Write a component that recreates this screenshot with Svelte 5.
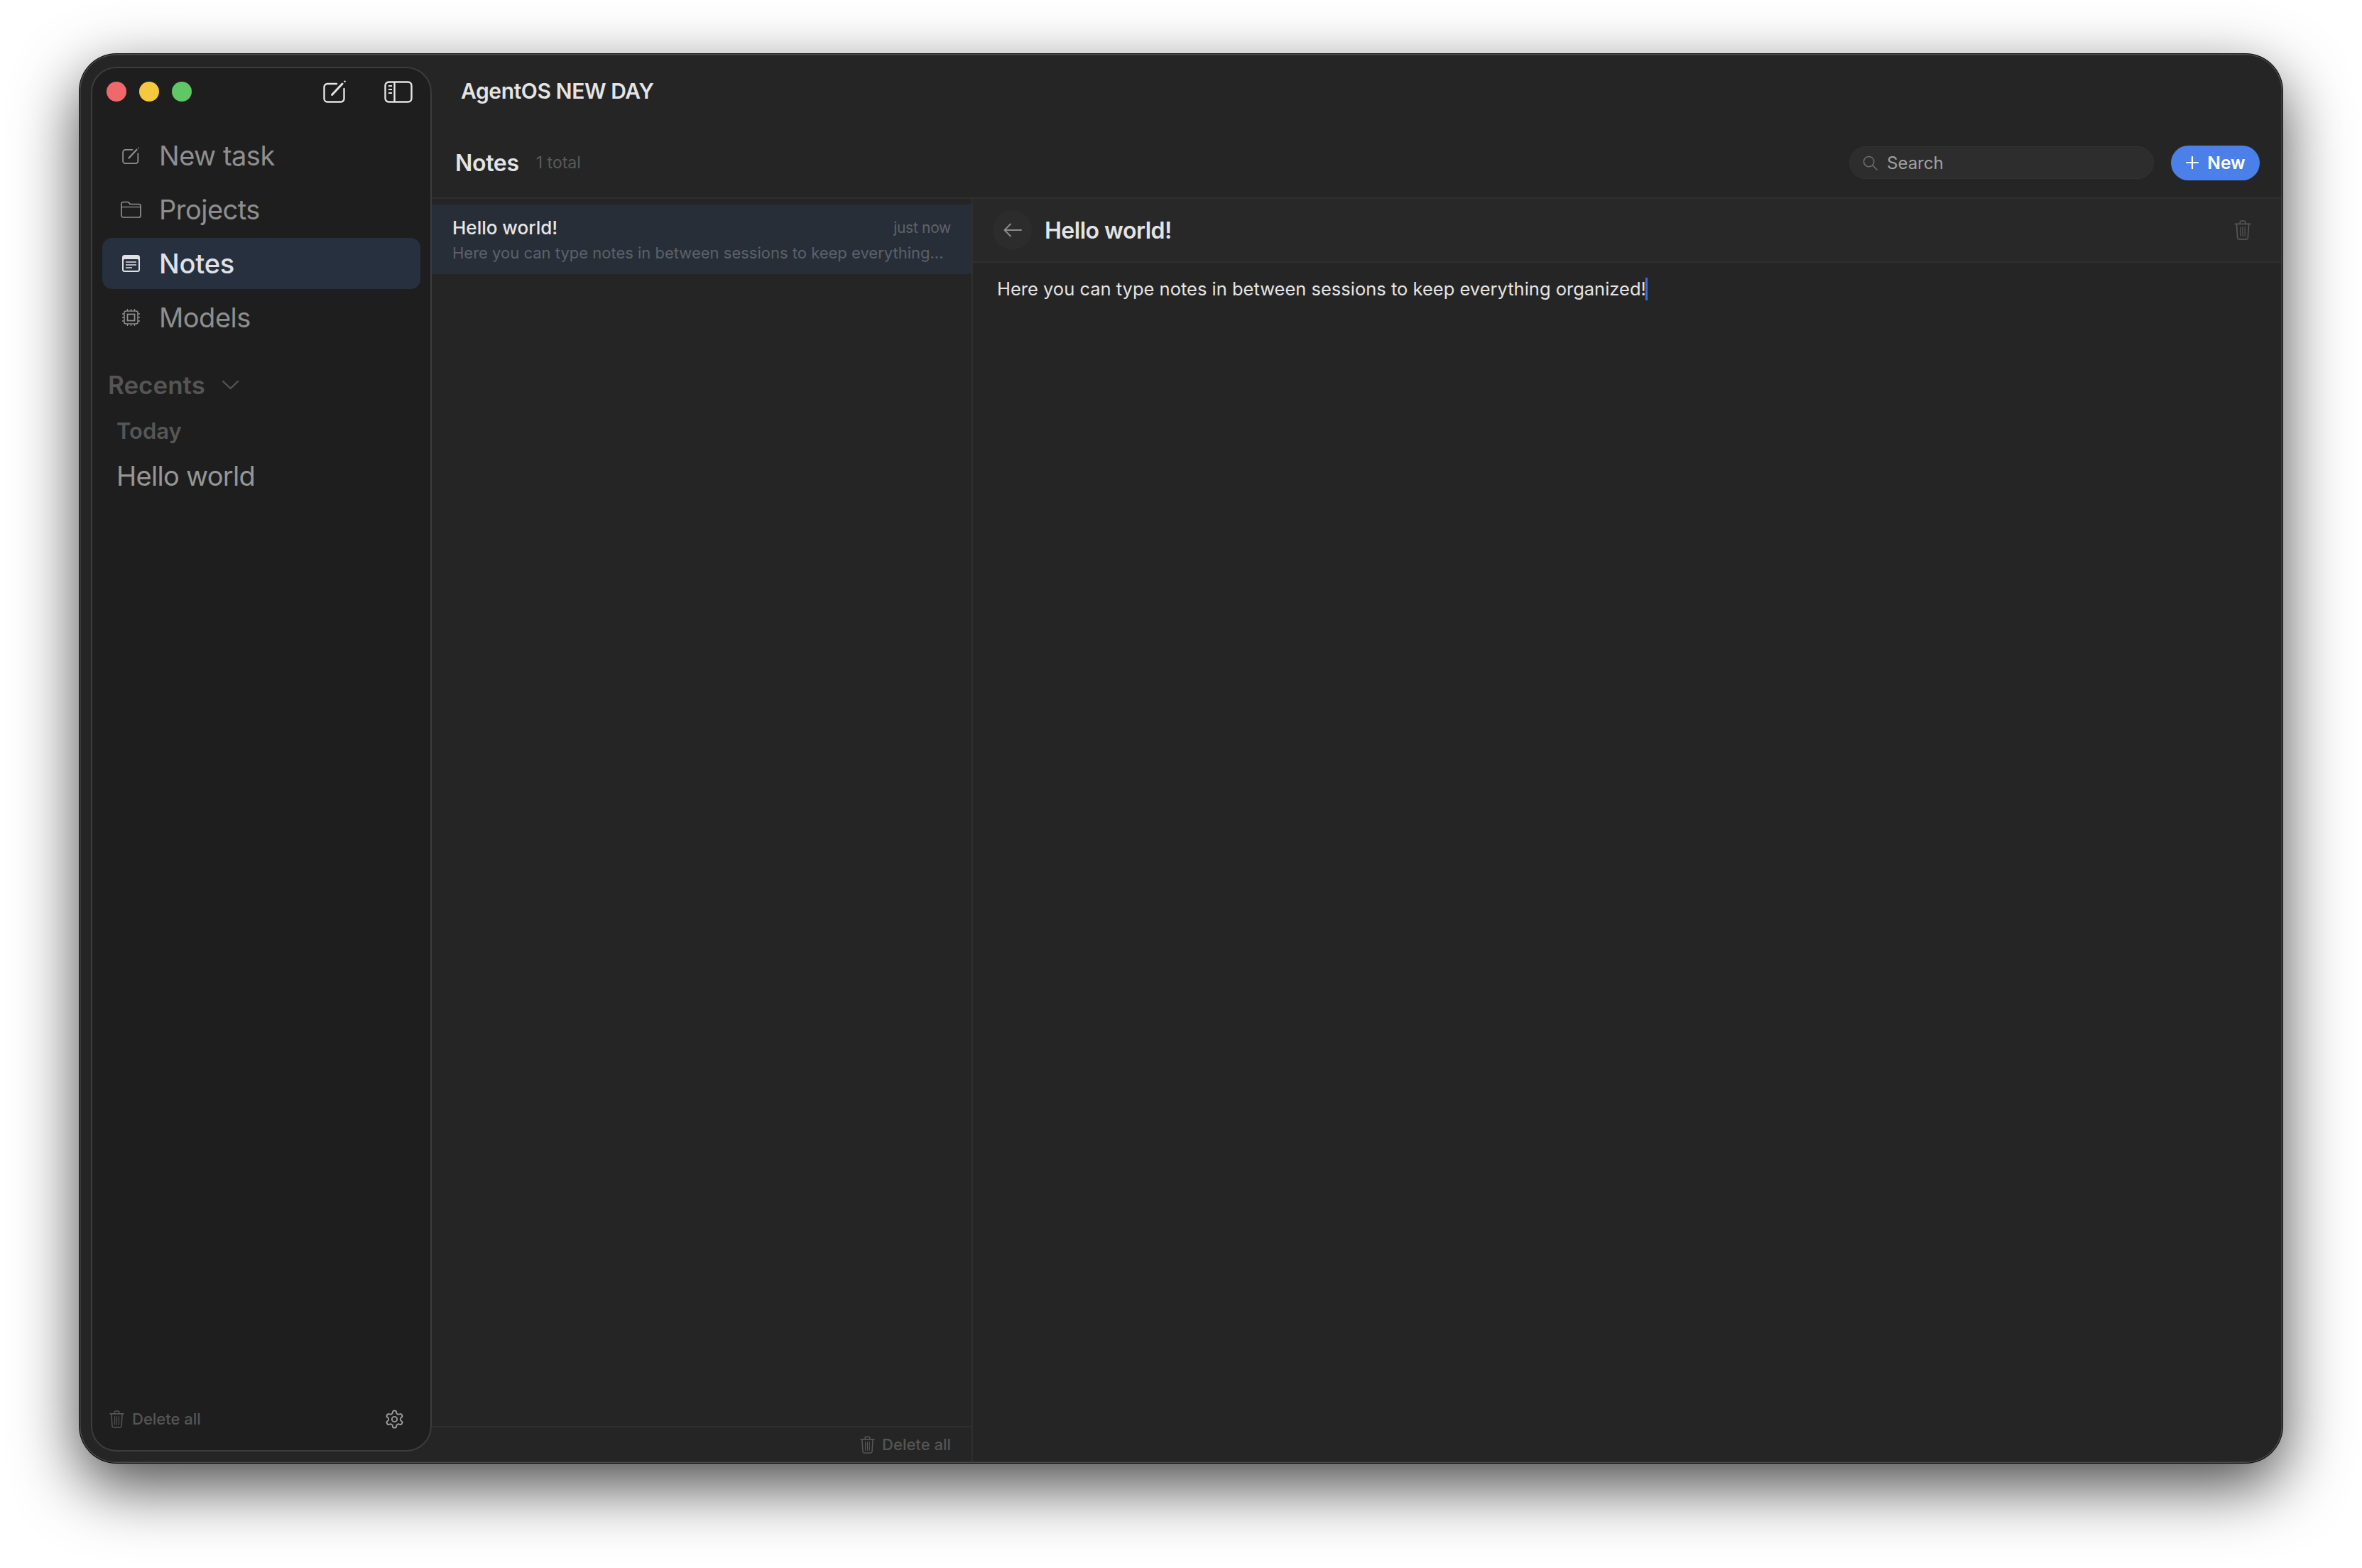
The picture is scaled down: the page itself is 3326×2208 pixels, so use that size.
<script>
  const navItems = [
    { name: 'New task', icon: 'compose' },
    { name: 'Projects', icon: 'folder' },
    { name: 'Notes', icon: 'notes', active: true },
    { name: 'Models', icon: 'cpu' }
  ]
  const noteBody = 'Here you can type notes in between sessions to keep everything organized!'
</script>

{#snippet trash(cls)}
  <svg class={cls} viewBox="0 0 22 26" fill="none" stroke="currentColor" stroke-width="1.6" stroke-linecap="round" stroke-linejoin="round">
    <path d="M1 5h20" />
    <path d="M7.5 5V3a2 2 0 0 1 2-2h3a2 2 0 0 1 2 2v2" />
    <path d="M3 5l1.2 18.2A2 2 0 0 0 6.2 25h9.6a2 2 0 0 0 2-1.8L19 5" />
    <path d="M8 9v12M11 9v12M14 9v12" stroke-width="1.2" />
  </svg>
{/snippet}

{#snippet compose(cls)}
  <svg class={cls} viewBox="0 0 33 33" fill="none" stroke="currentColor" stroke-width="2.4" stroke-linecap="round" stroke-linejoin="round">
    <path d="M19 5H6a4.5 4.5 0 0 0-4.5 4.5V26A4.5 4.5 0 0 0 6 30.5h19a4.5 4.5 0 0 0 4.5-4.5V12" />
    <path d="M12.5 20.5 27 5" stroke-width="3" />
    <circle cx="30.5" cy="1.8" r="1.3" fill="currentColor" stroke="none" />
  </svg>
{/snippet}

<div class="page">
  <div class="window">
    <aside class="sidebar">
      <div class="side-top">
        <div class="lights">
          <span class="light red"></span>
          <span class="light yellow"></span>
          <span class="light green"></span>
        </div>
        <div class="side-tools">
          {@render compose('tool-compose')}
          <svg class="tool-panel" viewBox="0 0 40 31" fill="none" stroke="currentColor" stroke-width="2.4">
            <rect x="1.5" y="1.5" width="37" height="28" rx="5" />
            <path d="M14.5 1.5v28" />
            <path d="M6 7h5M6 12h5M6 17h5" stroke-width="2" />
          </svg>
        </div>
      </div>

      <nav class="nav">
        {#each navItems as item}
          <div class="nav-row" class:active={item.active}>
            <span class="nav-icon">
              {#if item.icon === 'compose'}
                {@render compose('ic-compose')}
              {:else if item.icon === 'folder'}
                <svg class="ic-folder" viewBox="0 0 29 24" fill="none" stroke="currentColor" stroke-width="1.7" stroke-linejoin="round">
                  <path d="M1 4a2.5 2.5 0 0 1 2.5-2.5h6.3a2 2 0 0 1 1.5.6l1.9 2.4h12.3A2.5 2.5 0 0 1 28 7v13.5a2.5 2.5 0 0 1-2.5 2.5h-22A2.5 2.5 0 0 1 1 20.5z" />
                  <path d="M1 8.5h27" stroke-width="1.3" />
                </svg>
              {:else if item.icon === 'notes'}
                <svg class="ic-notes" viewBox="0 0 25 24">
                  <rect x="0" y="0" width="25" height="24" rx="3.5" fill="currentColor" />
                  <rect x="2" y="6" width="21" height="16" rx="1.5" fill="#27303f" />
                  <path d="M5 10h15M5 14h15M5 18h9" stroke="currentColor" stroke-width="1.7" fill="none" />
                </svg>
              {:else}
                <svg class="ic-cpu" viewBox="0 0 25 24" fill="none" stroke="currentColor" stroke-width="1.5">
                  <rect x="3" y="3" width="19" height="18" rx="2.5" />
                  <rect x="7.5" y="7.5" width="10" height="9" stroke-width="1.8" />
                  <path d="M7.5 0v3M12.5 0v3M17.5 0v3M7.5 21v3M12.5 21v3M17.5 21v3M0 7h3M0 12h3M0 17h3M22 7h3M22 12h3M22 17h3" stroke-width="1.3" />
                </svg>
              {/if}
            </span>
            <span class="nav-label">{item.name}</span>
          </div>
        {/each}
      </nav>

      <div class="recents-head">
        <span>Recents</span>
        <svg class="chevron" viewBox="0 0 25 14" fill="none" stroke="currentColor" stroke-width="2.4" stroke-linecap="round" stroke-linejoin="round">
          <path d="M2 2l10.5 10L23 2" />
        </svg>
      </div>
      <div class="recents-day">Today</div>
      <div class="recents-item">Hello world</div>

      <div class="side-foot">
        <div class="del">
          {@render trash('del-ic')}
          <span>Delete all</span>
        </div>
        <svg class="gear" viewBox="0 0 24 24" fill="none" stroke="currentColor" stroke-width="1.6" stroke-linecap="round" stroke-linejoin="round">
          <path d="M12.22 2h-.44a2 2 0 0 0-2 2v.18a2 2 0 0 1-1 1.73l-.43.25a2 2 0 0 1-2 0l-.15-.08a2 2 0 0 0-2.73.73l-.22.38a2 2 0 0 0 .73 2.73l.15.1a2 2 0 0 1 1 1.72v.51a2 2 0 0 1-1 1.74l-.15.09a2 2 0 0 0-.73 2.73l.22.38a2 2 0 0 0 2.73.73l.15-.08a2 2 0 0 1 2 0l.43.25a2 2 0 0 1 1 1.73V20a2 2 0 0 0 2 2h.44a2 2 0 0 0 2-2v-.18a2 2 0 0 1 1-1.73l.43-.25a2 2 0 0 1 2 0l.15.08a2 2 0 0 0 2.73-.73l.22-.39a2 2 0 0 0-.73-2.73l-.15-.08a2 2 0 0 1-1-1.74v-.5a2 2 0 0 1 1-1.74l.15-.09a2 2 0 0 0 .73-2.73l-.22-.38a2 2 0 0 0-2.73-.73l-.15.08a2 2 0 0 1-2 0l-.43-.25a2 2 0 0 1-1-1.73V4a2 2 0 0 0-2-2z" />
          <circle cx="12" cy="12" r="3" />
        </svg>
      </div>
    </aside>

    <main class="main">
      <div class="titlebar">AgentOS NEW DAY</div>

      <header class="notes-head">
        <div class="notes-title">
          <h1>Notes</h1>
          <span class="count">1 total</span>
        </div>
        <div class="notes-actions">
          <div class="search">
            <svg class="search-ic" viewBox="0 0 22 22" fill="none" stroke="currentColor" stroke-width="1.6" stroke-linecap="round">
              <circle cx="9" cy="9" r="7.5" />
              <path d="M14.5 14.5 21 21" />
            </svg>
            <span>Search</span>
          </div>
          <button class="new-btn">
            <svg class="plus" viewBox="0 0 18 18" fill="none" stroke="currentColor" stroke-width="2.2" stroke-linecap="round">
              <path d="M9 1v16M1 9h16" />
            </svg>
            New
          </button>
        </div>
      </header>

      <div class="panes">
        <section class="list">
          <div class="list-items">
            <div class="note-card">
              <div class="note-top">
                <span class="note-name">Hello world!</span>
                <span class="note-time">just now</span>
              </div>
              <div class="note-preview">{noteBody.slice(0, 62)}...</div>
            </div>
          </div>
          <div class="list-foot">
            <div class="del">
              {@render trash('del-ic')}
              <span>Delete all</span>
            </div>
          </div>
        </section>

        <section class="detail">
          <div class="detail-head">
            <div class="detail-left">
              <span class="back">
                <svg class="arrow" viewBox="0 0 26 20" fill="none" stroke="currentColor" stroke-width="2" stroke-linecap="round" stroke-linejoin="round">
                  <path d="M25 10H2M10 1.5 1.5 10l8.5 8.5" />
                </svg>
              </span>
              <h2>Hello world!</h2>
            </div>
            {@render trash('detail-trash')}
          </div>
          <div class="detail-body">{noteBody}<span class="caret"></span></div>
        </section>
      </div>
    </main>
  </div>
</div>

<style>
  :global(body) {
    margin: 0;
    background: #fff;
  }

  .page {
    width: 3326px;
    height: 2208px;
    padding: 76px 112px 0;
    box-sizing: border-box;
    font-family: Inter, "Liberation Sans", sans-serif;
    overflow: hidden;
  }

  .window {
    width: 3102px;
    height: 1984px;
    box-sizing: border-box;
    display: flex;
    background: #252525;
    border-radius: 52px;
    overflow: hidden;
    padding: 18px 0 0 16px;
    box-shadow: 0 32px 90px rgba(0, 0, 0, 0.72), 0 0 0 1px #111;
    position: relative;
  }

  .window::after {
    content: '';
    position: absolute;
    inset: 0;
    border-radius: 52px;
    box-shadow: inset 0 0 0 1.5px #4a4a4a;
    pointer-events: none;
  }

  /* sidebar */
  .sidebar {
    width: 480px;
    height: 1950px;
    flex: none;
    box-sizing: border-box;
    display: flex;
    flex-direction: column;
    background: #1e1e1e;
    border: 2px solid #3c3c3c;
    border-radius: 36px;
    padding: 0 14px;
  }

  .side-top {
    height: 66px;
    flex: none;
    display: flex;
    align-items: center;
    justify-content: space-between;
    padding: 0 11px 0 6px;
  }

  .lights {
    display: flex;
    gap: 18px;
  }

  .light {
    width: 28px;
    height: 28px;
    border-radius: 50%;
  }
  .red { background: #f0696a; }
  .yellow { background: #f5c93f; }
  .green { background: #5fc763; }

  .side-tools {
    display: flex;
    align-items: center;
    gap: 53px;
    color: #e4e4e4;
  }

  :global(.tool-compose) {
    width: 33px;
    height: 33px;
  }

  .tool-panel {
    width: 40px;
    height: 31px;
  }

  .nav {
    margin-top: 21px;
    display: flex;
    flex-direction: column;
    gap: 4px;
  }

  .nav-row {
    height: 72px;
    display: flex;
    align-items: center;
    gap: 25px;
    padding-left: 25px;
    border-radius: 14px;
    color: #8f8f8f;
  }

  .nav-row.active {
    background: #27303f;
    color: #dfe1e6;
    font-weight: 500;
  }

  .nav-icon {
    width: 30px;
    display: flex;
    justify-content: center;
  }

  :global(.ic-compose) {
    width: 25px;
    height: 25px;
  }

  .ic-folder {
    width: 29px;
    height: 24px;
  }

  .ic-notes, .ic-cpu {
    width: 25px;
    height: 24px;
  }

  .nav-label {
    font-size: 38px;
    letter-spacing: -0.5px;
  }

  .active .nav-label {
    letter-spacing: -0.2px;
  }

  .recents-head {
    margin-top: 39px;
    margin-left: 8px;
    height: 40px;
    display: flex;
    align-items: center;
    gap: 23px;
    font-size: 35px;
    font-weight: 600;
    color: #555;
  }

  .chevron {
    width: 25px;
    height: 14px;
  }

  .recents-day {
    margin: 25px 0 0 20px;
    height: 40px;
    line-height: 40px;
    font-size: 31px;
    font-weight: 600;
    color: #565656;
  }

  .recents-item {
    margin: 18px 0 0 20px;
    height: 50px;
    line-height: 50px;
    font-size: 38px;
    letter-spacing: -0.7px;
    color: #969696;
  }

  .side-foot {
    margin-top: auto;
    height: 88px;
    flex: none;
    display: flex;
    align-items: center;
    justify-content: space-between;
    padding: 0 22px 0 10px;
  }

  .del {
    display: flex;
    align-items: center;
    gap: 11px;
    font-size: 22px;
    font-weight: 500;
    color: #555;
  }

  :global(.del-ic) {
    width: 21px;
    height: 25px;
  }

  .gear {
    width: 29px;
    height: 29px;
    color: #9a9a9a;
  }

  /* main */
  .main {
    flex: 1;
    min-width: 0;
    display: flex;
    flex-direction: column;
    margin-top: -18px;
  }

  .titlebar {
    height: 104px;
    flex: none;
    display: flex;
    align-items: center;
    padding-left: 41px;
    font-size: 30px;
    font-weight: 600;
    letter-spacing: -0.4px;
    color: #e4e4e4;
  }

  .notes-head {
    height: 100px;
    flex: none;
    box-sizing: border-box;
    display: flex;
    align-items: center;
    justify-content: space-between;
    padding: 0 32px 0 33px;
    border-bottom: 2px solid #2f2f2f;
  }

  .notes-title {
    display: flex;
    align-items: center;
    gap: 24px;
  }

  h1 {
    margin: 0;
    font-size: 32px;
    font-weight: 600;
    letter-spacing: -0.3px;
    color: #e4e4e4;
  }

  .count {
    font-size: 23px;
    color: #5a5a5a;
  }

  .notes-actions {
    display: flex;
    align-items: center;
    gap: 24px;
  }

  .search {
    width: 429px;
    height: 46px;
    box-sizing: border-box;
    display: flex;
    align-items: center;
    gap: 13px;
    padding-left: 18px;
    background: #2d2d2d;
    border: 1px solid #333;
    border-radius: 23px;
    font-size: 24px;
    color: #a0a0a0;
  }

  .search-ic {
    width: 21px;
    height: 21px;
    color: #6c6c6c;
  }

  .new-btn {
    width: 125px;
    height: 49px;
    display: flex;
    align-items: center;
    justify-content: center;
    gap: 12px;
    padding: 0 0 0 1px;
    border: 0;
    border-radius: 25px;
    background: #4a80e8;
    color: #fff;
    font-family: inherit;
    font-size: 24.5px;
    font-weight: 600;
  }

  .plus {
    width: 18px;
    height: 18px;
  }

  .panes {
    flex: 1;
    min-height: 0;
    display: flex;
  }

  .list {
    width: 762px;
    flex: none;
    box-sizing: border-box;
    display: flex;
    flex-direction: column;
    border-right: 2px solid #2f2f2f;
  }

  .list-items {
    flex: 1;
    padding-top: 8px;
  }

  .note-card {
    height: 98px;
    box-sizing: border-box;
    padding: 16px 29px 0 29px;
    background: #282e38;
  }

  .note-top {
    display: flex;
    align-items: center;
    justify-content: space-between;
    height: 32px;
  }

  .note-name {
    font-size: 26px;
    font-weight: 500;
    color: #e6e6e6;
  }

  .note-time {
    font-size: 21px;
    letter-spacing: -0.3px;
    color: #5f6369;
  }

  .note-preview {
    margin-top: 5px;
    font-size: 22px;
    line-height: 30px;
    color: #5c616a;
    white-space: nowrap;
  }

  .list-foot {
    height: 52px;
    flex: none;
    box-sizing: border-box;
    display: flex;
    align-items: center;
    justify-content: flex-end;
    padding: 0 29px 2px 0;
    border-top: 2px solid #2f2f2f;
  }

  .list-foot .del {
    gap: 10px;
  }

  .detail {
    flex: 1;
    min-width: 0;
    display: flex;
    flex-direction: column;
  }

  .detail-head {
    height: 90px;
    flex: none;
    box-sizing: border-box;
    display: flex;
    align-items: center;
    justify-content: space-between;
    padding: 0 44px 0 28px;
    background: #282828;
    border-bottom: 2px solid #2f2f2f;
  }

  .detail-left {
    display: flex;
    align-items: center;
    gap: 18px;
  }

  .back {
    width: 55px;
    height: 56px;
    display: flex;
    align-items: center;
    justify-content: center;
    border-radius: 50%;
    background: #2c2c2c;
    color: #8c8c8c;
  }

  .arrow {
    width: 26px;
    height: 20px;
  }

  h2 {
    margin: 0;
    font-size: 32px;
    font-weight: 600;
    letter-spacing: -0.5px;
    color: #e4e4e4;
  }

  :global(.detail-trash) {
    width: 24px;
    height: 28px;
    color: #555;
  }

  .detail-body {
    padding: 18px 34px 0;
    font-size: 25.5px;
    line-height: 38px;
    color: #e4e4e4;
    white-space: nowrap;
  }

  .caret {
    display: inline-block;
    width: 3px;
    height: 32px;
    margin-left: -1px;
    vertical-align: -7px;
    background: #2f6fe8;
  }
</style>
